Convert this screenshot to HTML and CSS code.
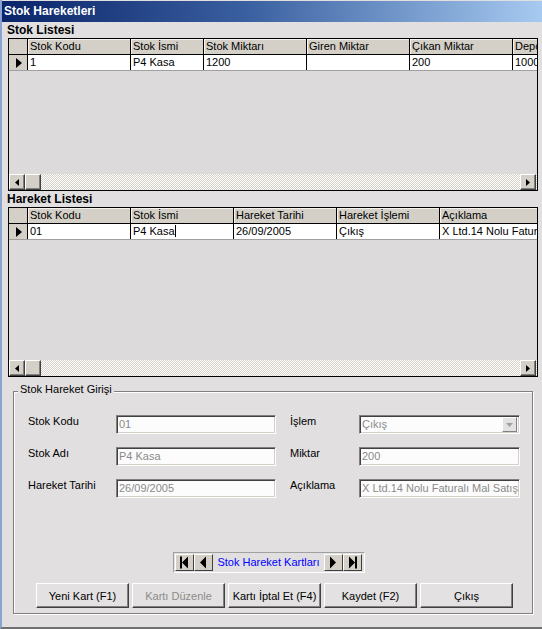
FILE: index.html
```html
<!DOCTYPE html>
<html lang="tr">
<head>
<meta charset="utf-8">
<title>Stok Hareketleri</title>
<link rel="stylesheet" href="styles.css">
</head>
<body>
<div class="window">
  <div class="titlebar">Stok Hareketleri</div>

  <div class="section-label">Stok Listesi</div>
  <div class="grid grid-stok">
    <div class="row head">
      <div class="ind"></div>
      <div class="cell c103">Stok Kodu</div>
      <div class="cell c73">Stok İsmi</div>
      <div class="cell c103">Stok Miktarı</div>
      <div class="cell c103">Giren Miktar</div>
      <div class="cell c103">Çıkan Miktar</div>
      <div class="cell fill">Depo</div>
    </div>
    <div class="row data">
      <div class="ind"><svg width="6" height="10" viewBox="0 0 6 10"><path d="M0 0L6 5L0 10Z"/></svg></div>
      <div class="cell c103">1</div>
      <div class="cell c73">P4 Kasa</div>
      <div class="cell c103">1200</div>
      <div class="cell c103"></div>
      <div class="cell c103">200</div>
      <div class="cell fill">1000</div>
    </div>
    <div class="grid-body"></div>
    <div class="hscroll">
      <div class="sb-btn"><svg width="4" height="7" viewBox="0 0 4 7"><path d="M4 0L0 3.5L4 7Z"/></svg></div>
      <div class="sb-btn"></div>
      <div class="sb-btn sb-right"><svg width="4" height="7" viewBox="0 0 4 7"><path d="M0 0L4 3.5L0 7Z"/></svg></div>
    </div>
  </div>

  <div class="section-label">Hareket Listesi</div>
  <div class="grid grid-hareket">
    <div class="row head">
      <div class="ind"></div>
      <div class="cell c103">Stok Kodu</div>
      <div class="cell c103">Stok İsmi</div>
      <div class="cell c103">Hareket Tarihi</div>
      <div class="cell c103">Hareket İşlemi</div>
      <div class="cell fill">Açıklama</div>
    </div>
    <div class="row data">
      <div class="ind"><svg width="6" height="10" viewBox="0 0 6 10"><path d="M0 0L6 5L0 10Z"/></svg></div>
      <div class="cell c103">01</div>
      <div class="cell c103">P4 Kasa<span class="caret"></span></div>
      <div class="cell c103">26/09/2005</div>
      <div class="cell c103">Çıkış</div>
      <div class="cell fill">X Ltd.14 Nolu Faturalı Mal Satışı</div>
    </div>
    <div class="grid-body"></div>
    <div class="hscroll">
      <div class="sb-btn"><svg width="4" height="7" viewBox="0 0 4 7"><path d="M4 0L0 3.5L4 7Z"/></svg></div>
      <div class="sb-btn"></div>
      <div class="sb-btn sb-right"><svg width="4" height="7" viewBox="0 0 4 7"><path d="M0 0L4 3.5L0 7Z"/></svg></div>
    </div>
  </div>

  <div class="group">
    <span class="legend">Stok Hareket Girişi</span>
    <div class="form">
      <div class="lbl">Stok Kodu</div>
      <div class="inp">01</div>
      <div class="lbl lbl-right">İşlem</div>
      <div class="inp combo"><span class="combo-text">Çıkış</span><span class="combo-btn"><svg width="7" height="4" viewBox="0 0 7 4"><path d="M0 0h7L3.5 4z"/></svg></span></div>

      <div class="lbl">Stok Adı</div>
      <div class="inp">P4 Kasa</div>
      <div class="lbl lbl-right">Miktar</div>
      <div class="inp">200</div>

      <div class="lbl">Hareket Tarihi</div>
      <div class="inp">26/09/2005</div>
      <div class="lbl lbl-right">Açıklama</div>
      <div class="inp">X Ltd.14 Nolu Faturalı Mal Satışı</div>
    </div>

    <div class="nav">
      <div class="nav-btn"><svg width="17" height="15" viewBox="0 0 17 15"><path d="M4 1.5h2v12h-2z M6 7.5L12 1.5V13.5Z"/></svg></div>
      <div class="nav-btn"><svg width="17" height="15" viewBox="0 0 17 15"><path d="M5 7.5L11 1.5V13.5Z"/></svg></div>
      <div class="nav-label">Stok Hareket Kartları</div>
      <div class="nav-btn"><svg width="17" height="15" viewBox="0 0 17 15"><path d="M5 1.5L11 7.5L5 13.5Z"/></svg></div>
      <div class="nav-btn"><svg width="17" height="15" viewBox="0 0 17 15"><path d="M5 1.5L11 7.5L5 13.5Z M11 1.5h2v12h-2z"/></svg></div>
    </div>

    <div class="buttons">
      <div class="btn">Yeni Kart (F1)</div>
      <div class="btn disabled">Kartı Düzenle</div>
      <div class="btn">Kartı İptal Et (F4)</div>
      <div class="btn">Kaydet (F2)</div>
      <div class="btn">Çıkış</div>
    </div>
  </div>
</div>
</body>
</html>
```

FILE: styles.css
```css
* { box-sizing: border-box; }

body {
  margin: 0;
  font-family: "Liberation Sans", Arial, sans-serif;
  font-size: 11px;
  color: #000;
}

.window {
  width: 542px;
  height: 629px;
  background: #e1dfe0;
  border-left: 2px solid #8aa4d2;
  border-bottom: 2px solid #707070;
  display: flex;
  flex-direction: column;
  overflow: hidden;
}

.titlebar {
  flex: none;
  margin-top: 1px;
  height: 21px;
  line-height: 21px;
  padding-left: 2px;
  background: linear-gradient(90deg, #0a246a 0%, #3a5fa0 45%, #a6caf0 100%);
  color: #fff;
  font-weight: bold;
  font-size: 12px;
}

.section-label {
  flex: none;
  height: 16px;
  line-height: 16px;
  padding-left: 5px;
  font-weight: bold;
  font-size: 12px;
}

.grid {
  flex: none;
  margin-left: 6px;
  width: 530px;
  border: 1px solid #000;
  display: flex;
  flex-direction: column;
  background: #dcdada;
}
.grid-stok { height: 153px; }
.grid-hareket { height: 170px; }

.row {
  flex: none;
  display: flex;
  height: 16px;
  border-bottom: 1px solid #000;
}
.row.data { border-bottom-color: #a0a0a0; }

.ind {
  flex: none;
  width: 19px;
  background: #d4d0c8;
  border-right: 1px solid #000;
  padding: 3px 0 0 7px;
}
.ind svg { display: block; }

.cell {
  flex: none;
  border-right: 1px solid #000;
  padding-left: 2px;
  line-height: 15px;
  white-space: nowrap;
  overflow: hidden;
  background: #fff;
}
.row.head .cell {
  background: #d4d0c8;
  box-shadow: inset 1px 1px 0 #f4f3f0;
}
.c103 { width: 103px; }
.c73 { width: 73px; }
.cell.fill { flex: 1; width: auto; border-right: none; }

.caret {
  display: inline-block;
  width: 1px;
  height: 12px;
  background: #000;
  vertical-align: -2px;
}

.grid-body { flex: 1; }

.hscroll {
  flex: none;
  height: 16px;
  display: flex;
  background: repeating-conic-gradient(#ffffff 0 25%, #d4d0c8 0 50%) 0 0 / 2px 2px;
}
.sb-btn {
  width: 16px;
  height: 16px;
  background: #d4d0c8;
  border: 1px solid;
  border-color: #fff #404040 #404040 #fff;
  box-shadow: inset -1px -1px 0 #808080;
  display: flex;
  align-items: center;
  justify-content: center;
}
.sb-right { margin-left: auto; margin-right: 1px; }

.group {
  position: relative;
  flex: none;
  margin: 14px 0 0 11px;
  width: 520px;
  border: 1px solid #808080;
  box-shadow: 1px 1px 0 #fff, inset 1px 1px 0 #fff;
  padding: 23px 0 5px 14px;
}
.legend {
  position: absolute;
  top: -9px;
  left: 4px;
  padding: 0 2px;
  line-height: 13px;
  background: #e1dfe0;
}

.form {
  display: grid;
  grid-template-columns: 88px 160px 83px 161px;
  grid-auto-rows: 19px;
  row-gap: 13px;
}
.lbl { line-height: 12px; }
.lbl-right { padding-left: 14px; }

.inp {
  height: 19px;
  border: 1px solid;
  border-color: #808080 #fff #fff #808080;
  box-shadow: inset 1px 1px 0 #404040, inset -1px -1px 0 #d4d0c8;
  background: #fcfcfc;
  color: #8a8a8a;
  padding-left: 2px;
  line-height: 17px;
  white-space: nowrap;
  overflow: hidden;
}
.combo { display: flex; align-items: center; padding-right: 2px; }
.combo-text { flex: 1; }
.combo-btn {
  width: 15px;
  height: 15px;
  background: #e4e2e2;
  border: 1px solid;
  border-color: #fff #808080 #808080 #fff;
  display: flex;
  align-items: center;
  justify-content: center;
}
.combo-btn svg { fill: #a0a0a0; }

.nav {
  margin: 54px 0 0 145px;
  width: 192px;
  height: 21px;
  border: 1px solid;
  border-color: #a0a0a0 #fff #fff #a0a0a0;
  padding: 1px 2px 1px 1px;
  display: flex;
}
.nav-btn {
  flex: none;
  width: 19px;
  height: 17px;
  background: #d4d0c8;
  border: 1px solid;
  border-color: #fff #404040 #404040 #fff;
}
.nav-btn svg { display: block; }
.nav-label {
  flex: 1;
  text-align: center;
  line-height: 17px;
  color: #0000ff;
  white-space: nowrap;
}

.buttons {
  margin: 10px 0 0 8px;
  display: flex;
  gap: 3px;
}
.btn {
  width: 93px;
  height: 25px;
  background: #e3e1e1;
  border: 1px solid;
  border-color: #fff #404040 #404040 #fff;
  box-shadow: inset -1px -1px 0 #808080;
  display: flex;
  align-items: center;
  justify-content: center;
  white-space: nowrap;
}
.btn.disabled { color: #8c8c8c; }
```
